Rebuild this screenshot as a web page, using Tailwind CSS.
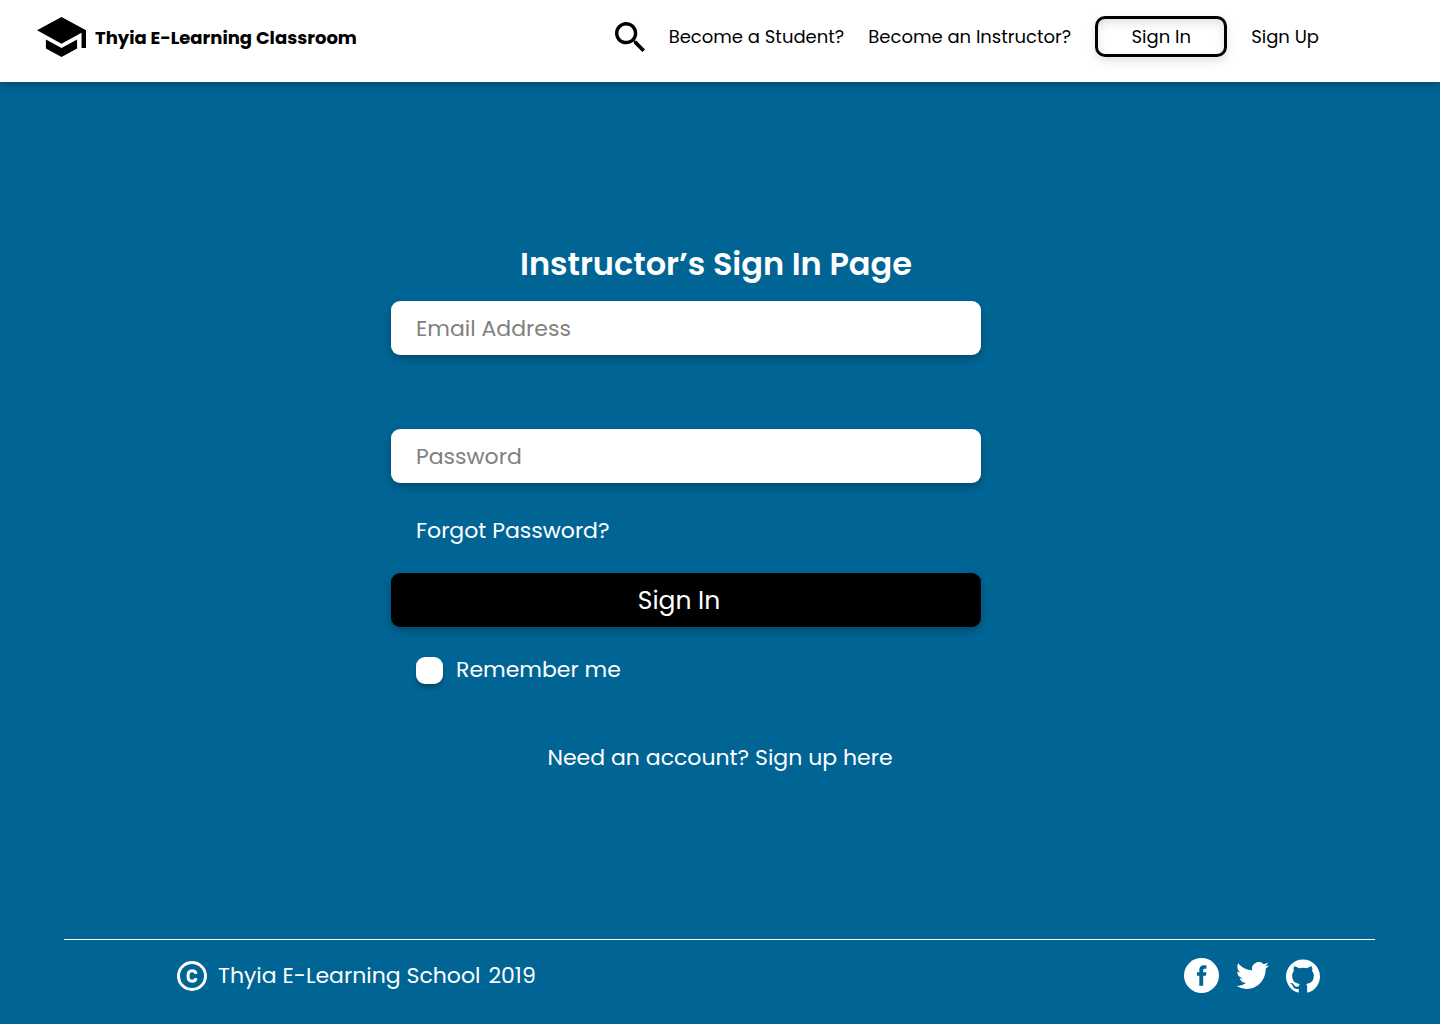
<!DOCTYPE html>
<html lang="en">
<head>
<meta charset="utf-8">
<meta name="viewport" content="width=device-width, initial-scale=1">
<title>Instructor’s Sign In – Thyia E-Learning Classroom</title>
<script src="https://cdn.jsdelivr.net/npm/@tailwindcss/browser@4"></script>
</head>
<body class="flex min-h-screen flex-col bg-[#006595] font-['Poppins','Inter',sans-serif] text-white">
<header class="flex items-end justify-between bg-white pt-4 pr-[121px] pb-[25px] pl-[37px] text-black shadow-[0_4px_10px_rgba(0,0,0,0.25)]">
  <a href="#" class="flex h-10 items-center gap-[9px] text-[18px] font-bold whitespace-nowrap">
    <svg class="h-10 w-[49px]" viewBox="1 3 22 18" preserveAspectRatio="none" fill="currentColor" aria-hidden="true"><path d="M5 13.18v4L12 21l7-3.82v-4L12 17l-7-3.82zM12 3L1 9l11 6 9-4.91V17h2V9L12 3z"/></svg>
    Thyia E-Learning Classroom
  </a>
  <nav class="flex h-[41px] items-center gap-6 text-[18px] whitespace-nowrap">
    <button type="button" aria-label="Search"><svg class="size-[30px]" viewBox="3 3 17.49 17.49" fill="currentColor" aria-hidden="true"><path d="M15.5 14h-.79l-.28-.27C15.41 12.59 16 11.11 16 9.5 16 5.91 13.09 3 9.5 3S3 5.91 3 9.5 5.91 16 9.5 16c1.61 0 3.09-.59 4.23-1.57l.27.28v.79l5 4.99L20.49 19l-4.99-5zm-6 0C7.01 14 5 11.99 5 9.5S7.01 5 9.5 5 14 7.01 14 9.5 11.99 14 9.5 14z"/></svg></button>
    <a href="#">Become a Student?</a>
    <a href="#">Become an Instructor?</a>
    <button type="button" class="h-[41px] w-[132px] rounded-[10px] border-3 border-black shadow-[0_4px_10px_rgba(0,0,0,0.12),inset_0_4px_10px_rgba(0,0,0,0.12)]">Sign In</button>
    <a href="#">Sign Up</a>
  </nav>
</header>

<main class="flex flex-1 flex-col items-center pt-[158px] text-[22px] leading-8">
  <h1 class="pr-2 text-[32px] leading-12 font-semibold">Instructor’s Sign In Page</h1>
  <form class="mt-[13px] mr-[68px] flex w-full max-w-[590px] flex-col items-start">
    <input type="email" aria-label="Email Address" placeholder="Email Address" class="h-[54px] w-full rounded-[9px] bg-white px-[25px] text-black shadow-[0_4px_8px_rgba(0,0,0,0.25)] placeholder:text-[#808080]">
    <input type="password" aria-label="Password" placeholder="Password" class="mt-[74px] h-[54px] w-full rounded-[9px] bg-white px-[25px] text-black shadow-[0_4px_8px_rgba(0,0,0,0.25)] placeholder:text-[#808080]">
    <a href="#" class="mt-8 ml-[25px]">Forgot Password?</a>
    <button type="submit" class="mt-[26px] h-[54px] w-full rounded-[9px] bg-black pt-[2px] pr-[14px] text-[25px] shadow-[0_4px_8px_rgba(0,0,0,0.25)]">Sign In</button>
    <label class="mt-[27px] ml-[25px] flex items-center gap-[13px]">
      <input type="checkbox" class="size-[27px] appearance-none rounded-[9px] bg-white shadow-[0_4px_4px_rgba(0,0,0,0.25)] checked:bg-black">
      Remember me
    </label>
  </form>
  <p class="mt-14">Need an account? <a href="#">Sign up here</a></p>
</main>

<footer class="mr-[65px] ml-16 flex h-[85px] items-start justify-between border-t border-white pt-[18px] pr-[55px] pl-[113px] text-[22px]">
  <p class="flex h-[35px] items-center whitespace-nowrap">
    <svg class="mr-[11px] size-[30px]" viewBox="0 0 30 30" fill="none" stroke="currentColor" stroke-width="3" role="img" aria-label="Copyright"><circle cx="15" cy="15" r="13.5"/><path d="M18.9 12.9C18.8 10.8 17.3 9.7 15 9.7c-2.8 0-4 2-4 5.3s1.200 5.300 4 5.300c2.300 0 3.800-1.200 3.900-3.200"/></svg>
    <span>Thyia E-Learning School</span><span class="ml-2">2019</span>
  </p>
  <div class="flex h-[35px] items-center">
    <a href="#" aria-label="Facebook"><svg class="size-[35px]" viewBox="0 0 35 35" fill="currentColor" aria-hidden="true"><path fill-rule="evenodd" d="M17.500 0a17.500 17.500 0 1 0 0 35 17.500 17.500 0 0 0 0-35zM15.300 27.700V17.800H13v-3.500h2.300v-2.200c0-3.400 1.600-4.900 4.600-4.900h2.500v3.500h-1.700c-1.100 0-1.500.5-1.500 1.500v2.100h3.200l-.4 3.500h-2.800v9.900z"/></svg></a>
    <a href="#" aria-label="Twitter" class="ml-[17px]"><svg class="h-[27px] w-[33px]" viewBox="0 2.250 24 19.510" fill="currentColor" aria-hidden="true"><path d="M23.953 4.570a10 10 0 0 1-2.825.775 4.958 4.958 0 0 0 2.163-2.723c-.951.555-2.005.959-3.127 1.184a4.920 4.920 0 0 0-8.384 4.482C7.690 8.095 4.067 6.130 1.640 3.162a4.822 4.822 0 0 0-.666 2.475c0 1.710.870 3.213 2.188 4.096a4.904 4.904 0 0 1-2.228-.616v.060a4.923 4.923 0 0 0 3.946 4.827 4.996 4.996 0 0 1-2.212.085 4.936 4.936 0 0 0 4.604 3.417 9.867 9.867 0 0 1-6.102 2.105c-.390 0-.779-.023-1.170-.067a13.995 13.995 0 0 0 7.557 2.209c9.053 0 13.998-7.496 13.998-13.985 0-.210 0-.420-.015-.630A9.935 9.935 0 0 0 24 4.590z"/></svg></a>
    <a href="#" aria-label="GitHub" class="ml-[17px]"><svg class="size-[34px]" viewBox="0 0 24 24" fill="currentColor" aria-hidden="true"><path d="M12 .297c-6.630 0-12 5.373-12 12 0 5.303 3.438 9.800 8.205 11.385.600.113.820-.258.820-.577 0-.285-.010-1.040-.015-2.040-3.338.724-4.042-1.610-4.042-1.610C4.422 18.070 3.633 17.700 3.633 17.700c-1.087-.744.084-.729.084-.729 1.205.084 1.838 1.236 1.838 1.236 1.070 1.835 2.809 1.305 3.495.998.108-.776.417-1.305.760-1.605-2.665-.300-5.466-1.332-5.466-5.930 0-1.310.465-2.380 1.235-3.220-.135-.303-.540-1.523.105-3.176 0 0 1.005-.322 3.300 1.230.960-.267 1.980-.399 3-.405 1.020.006 2.040.138 3 .405 2.280-1.552 3.285-1.230 3.285-1.230.645 1.653.240 2.873.120 3.176.765.840 1.230 1.910 1.230 3.220 0 4.610-2.805 5.625-5.475 5.920.420.360.810 1.096.810 2.220 0 1.606-.015 2.896-.015 3.286 0 .315.210.690.825.570C20.565 22.092 24 17.592 24 12.297c0-6.627-5.373-12-12-12"/></svg></a>
  </div>
</footer>
</body>
</html>
